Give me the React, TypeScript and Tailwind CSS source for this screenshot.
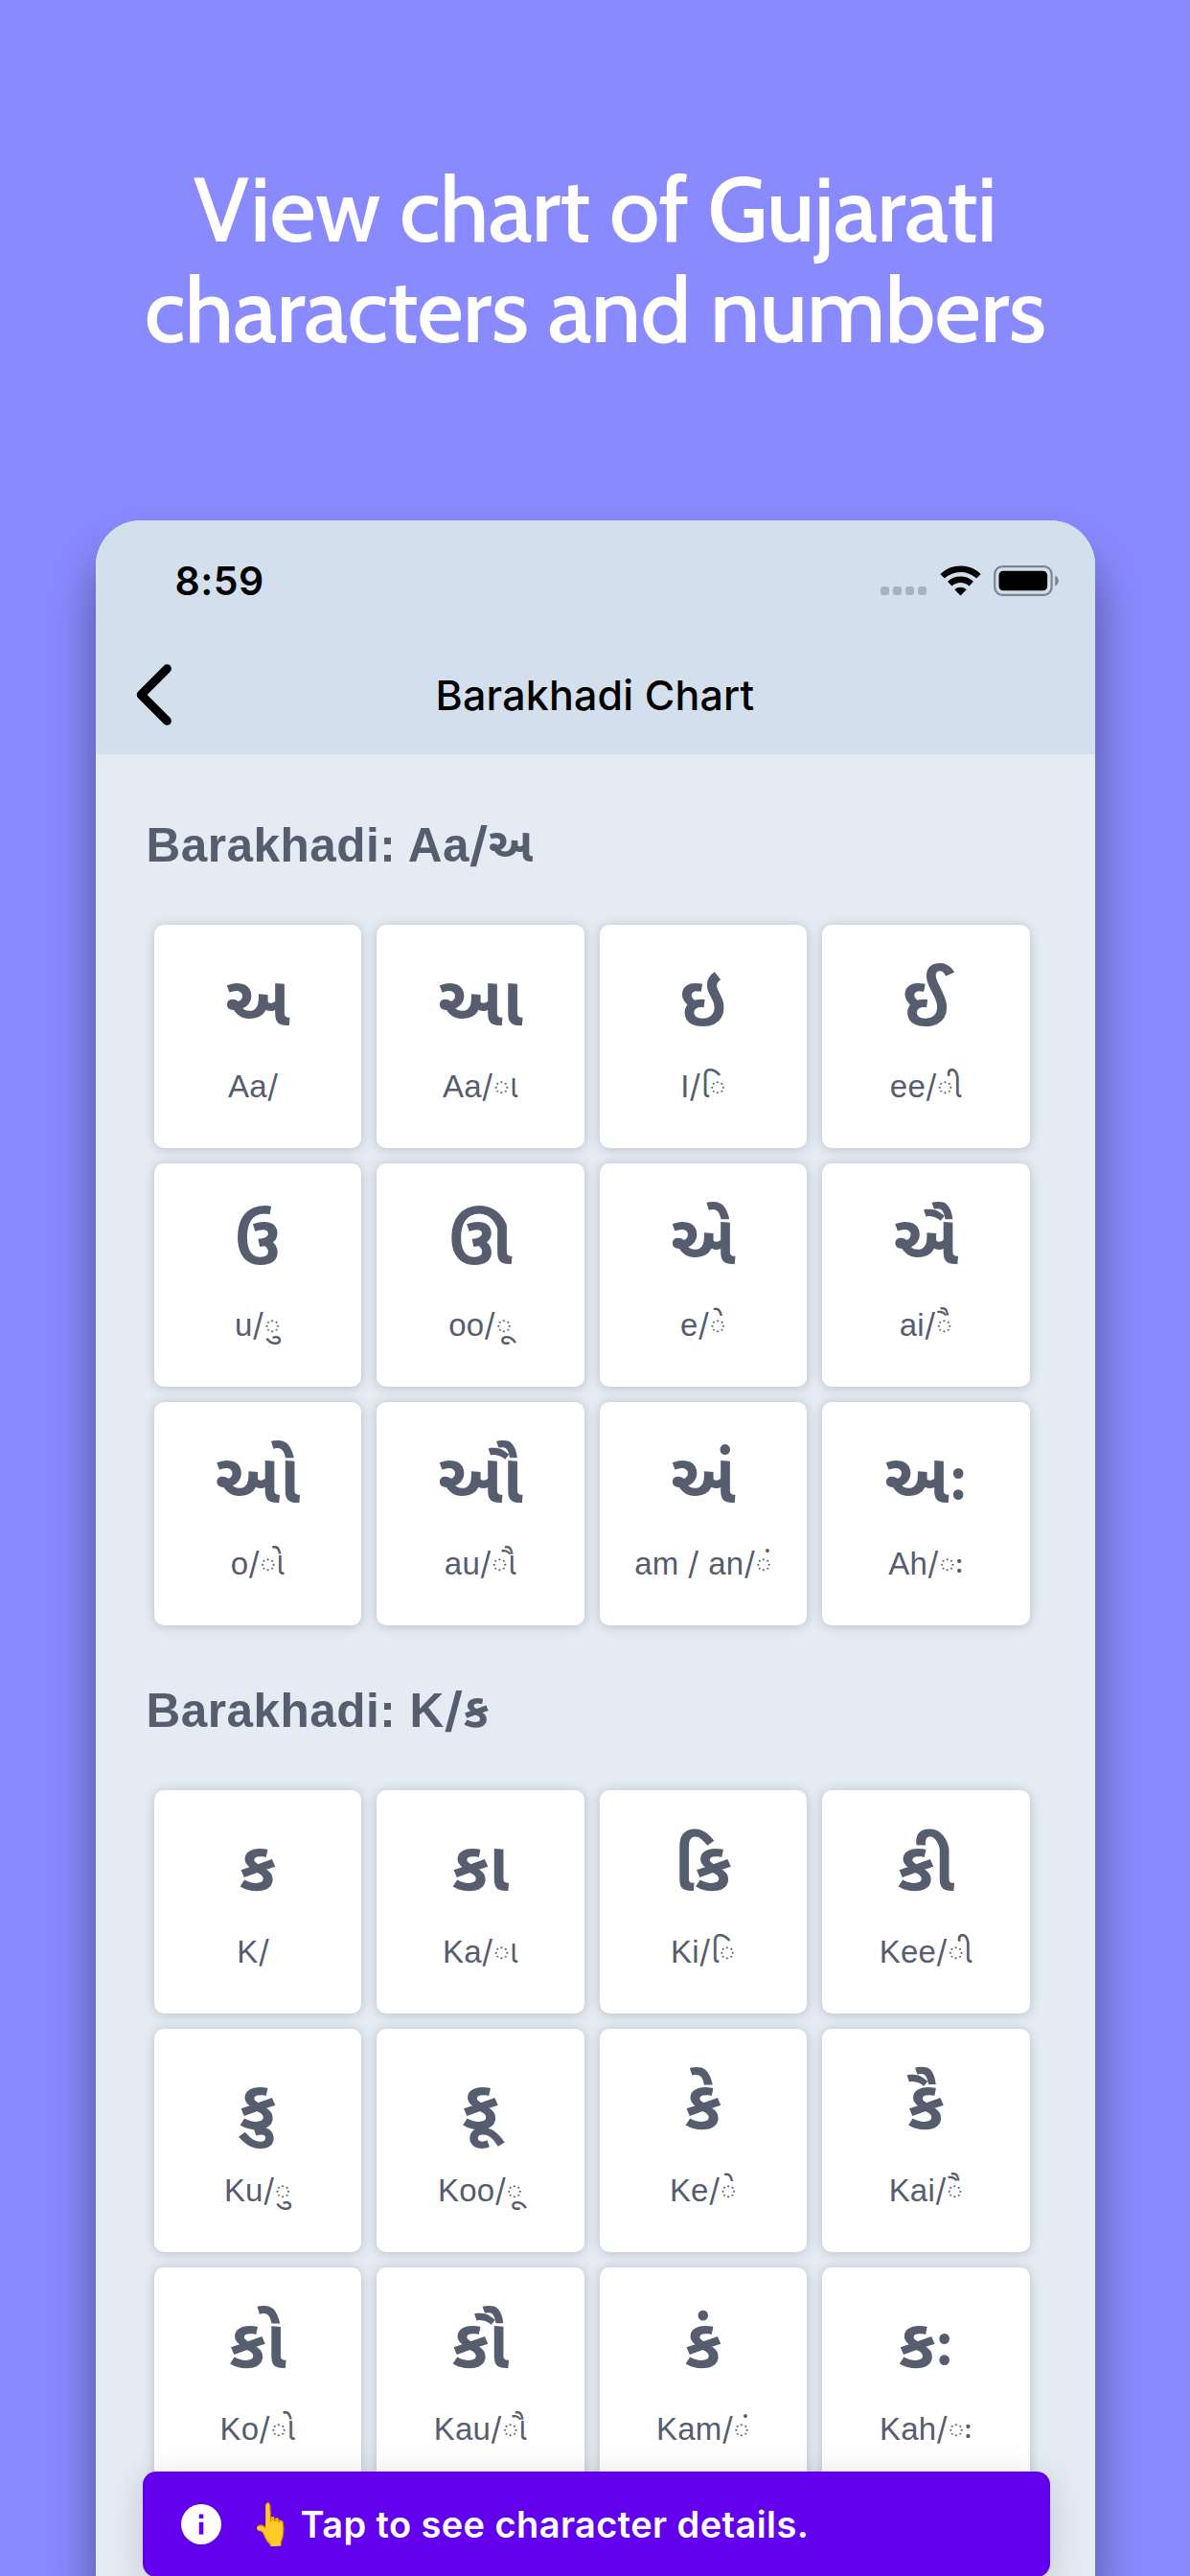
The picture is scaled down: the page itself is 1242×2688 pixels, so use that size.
import { Fragment } from 'react';

type Tile = { glyph: string; roman: string; sign: string };

const SIGNS = ['\u00a0', 'ા', 'િ', 'ી', 'ુ', 'ૂ', 'ે', 'ૈ', 'ો', 'ૌ', 'ં', 'ઃ'];

const tiles = (glyphs: string[], romans: string[]): Tile[] =>
  glyphs.map((glyph, i) => ({ glyph, roman: romans[i], sign: SIGNS[i] }));

const SECTIONS = [
  {
    roman: 'Aa',
    letter: 'અ',
    items: tiles(
      ['અ', 'આ', 'ઇ', 'ઈ', 'ઉ', 'ઊ', 'એ', 'ઐ', 'ઓ', 'ઔ', 'અં', 'અઃ'],
      ['Aa', 'Aa', 'I', 'ee', 'u', 'oo', 'e', 'ai', 'o', 'au', 'am / an', 'Ah'],
    ),
  },
  {
    roman: 'K',
    letter: 'ક',
    items: tiles(
      ['ક', 'કા', 'કિ', 'કી', 'કુ', 'કૂ', 'કે', 'કૈ', 'કો', 'કૌ', 'કં', 'કઃ'],
      ['K', 'Ka', 'Ki', 'Kee', 'Ku', 'Koo', 'Ke', 'Kai', 'Ko', 'Kau', 'Kam', 'Kah'],
    ),
  },
];

function StatusBar() {
  return (
    <div className="flex h-[126px] items-center justify-between pl-[83px] pr-[36px]">
      <span className="text-[41px] font-semibold leading-none tracking-[0.5px] text-black">8:59</span>
      <div className="flex h-8 items-end">
        <div className="mb-px flex gap-1">
          <span className="size-[9px] rounded-[3px] bg-[#a9b1bd]" />
          <span className="size-[9px] rounded-[3px] bg-[#a9b1bd]" />
          <span className="size-[9px] rounded-[3px] bg-[#a9b1bd]" />
          <span className="size-[9px] rounded-[3px] bg-[#a9b1bd]" />
        </div>
        <svg className="ml-[14px] h-8 w-[43px]" viewBox="0 0 43 32" fill="none">
          <path d="M2.6 11.2a27.5 27.5 0 0 1 37.8 0" stroke="#000" strokeWidth="6.4" />
          <path d="M10.2 19.2a16.5 16.5 0 0 1 22.6 0" stroke="#000" strokeWidth="6.4" />
          <path d="M21.5 31.4l-6.2-6.2a9 9 0 0 1 12.4 0z" fill="#000" />
        </svg>
        <svg className="ml-[13px] h-8 w-[70px]" viewBox="0 0 70 32" fill="none">
          <rect x="1.2" y="1.2" width="59.4" height="29.6" rx="8" stroke="#7d8591" strokeWidth="2.2" />
          <rect x="5.5" y="5.7" width="50.6" height="20.6" rx="4.5" fill="#000" />
          <path d="M64.2 10.6c2.3 1 3.6 3 3.6 5.4s-1.3 4.4-3.6 5.4z" fill="#7d8591" />
        </svg>
      </div>
    </div>
  );
}

function NavBar() {
  return (
    <div className="grid h-[112px] grid-cols-[120px_1fr_120px] items-center">
      <svg className="ml-[41px] h-[66px] w-[40px]" viewBox="0 0 40 66" fill="none">
        <path d="M33.4 5.8L6.2 33l27.2 27.2" stroke="#000" strokeWidth="9" strokeLinecap="round" strokeLinejoin="round" />
      </svg>
      <h2 className="text-center text-[43px] font-medium leading-none tracking-[0.15px] text-black">Barakhadi Chart</h2>
    </div>
  );
}

/** Latin text whose slashes are set in a taller, wider face. */
function Roman({ text }: { text: string }) {
  return (
    <>
      {text.split('/').map((part, i) => (
        <Fragment key={i}>
          {i > 0 && <span className="font-['Inter',sans-serif] leading-none">/</span>}
          {part}
        </Fragment>
      ))}
    </>
  );
}

function Card({ glyph, roman, sign }: Tile) {
  return (
    <div className="flex h-[233px] flex-col items-center rounded-[10px] bg-white pt-[42px] text-[#565d6e] shadow-[0_1px_12px_rgba(0,0,0,0.19)]">
      <span className="h-[90px] font-['Noto_Sans_Gujarati',sans-serif] text-[72px] font-bold leading-[90px]">{glyph}</span>
      <span className="mt-[17px] h-10 whitespace-pre font-['Liberation_Sans',sans-serif] text-[33px] leading-10 tracking-[0.2px]">
        <Roman text={roman + '/'} />
        <span className="font-['Noto_Sans_Gujarati',sans-serif] leading-none tracking-normal [font-feature-settings:'pres'_0,'psts'_0,'abvs'_0,'calt'_0]">
          {sign}
        </span>
      </span>
    </div>
  );
}

export default function App() {
  return (
    <div className="flex h-[2688px] w-[1242px] flex-col items-center overflow-hidden bg-[#8a8aff] font-['Inter',sans-serif]">
      <h1 className="flex h-[543px] shrink-0 flex-col items-center pt-[166px] font-['Cabin','Lato',sans-serif] text-[94px] font-medium leading-[105px] tracking-[-0.7px] text-white">
        <span>View chart of Gujarati</span>
        <span>characters and numbers</span>
      </h1>
      <div className="relative h-[2145px] w-[1043px] shrink-0 rounded-t-[47px] bg-[#e4ebf3] shadow-[0_35px_50px_rgba(0,0,0,0.4)]">
        <header className="h-[244px] rounded-t-[47px] bg-[#d3dfec]">
          <StatusBar />
          <NavBar />
        </header>
        <main className="h-[1901px] overflow-hidden pt-1.5">
          {SECTIONS.map((s) => (
            <section key={s.roman}>
              <h3 className="flex h-[172px] items-center pl-[53px] pt-[7px] font-['Liberation_Sans',sans-serif] text-[49.5px] font-bold tracking-[0.5px] text-[#565d6e]">
                <span className="whitespace-pre">
                  <Roman text={`Barakhadi: ${s.roman}/`} />
                  <span className="font-['Noto_Sans_Gujarati',sans-serif] leading-none">{s.letter}</span>
                </span>
              </h3>
              <div className="grid grid-cols-4 gap-4 pl-[61px] pr-[68px]">
                {s.items.map((t) => (
                  <Card key={t.glyph} {...t} />
                ))}
              </div>
            </section>
          ))}
        </main>
        <div className="absolute left-[49px] top-[2036px] flex h-[110px] w-[947px] items-center rounded-[14px] bg-[#6200ee] shadow-[0_8px_36px_rgba(0,0,0,0.16)]">
          <svg className="ml-10 size-[42px]" viewBox="0 0 42 42">
            <circle cx="21" cy="21" r="21" fill="#fff" />
            <rect x="18.7" y="10.5" width="4.6" height="4.4" fill="#6200ee" />
            <rect x="18.7" y="18.8" width="4.6" height="12.8" fill="#6200ee" />
          </svg>
          <span className="ml-[33px] flex w-[38px] scale-x-[0.82] scale-y-[1.08] justify-center text-[40px] leading-none">👆</span>
          <span className="ml-[12px] text-[38px] font-semibold leading-none tracking-[0.4px] text-white">Tap to see character details.</span>
        </div>
      </div>
    </div>
  );
}
